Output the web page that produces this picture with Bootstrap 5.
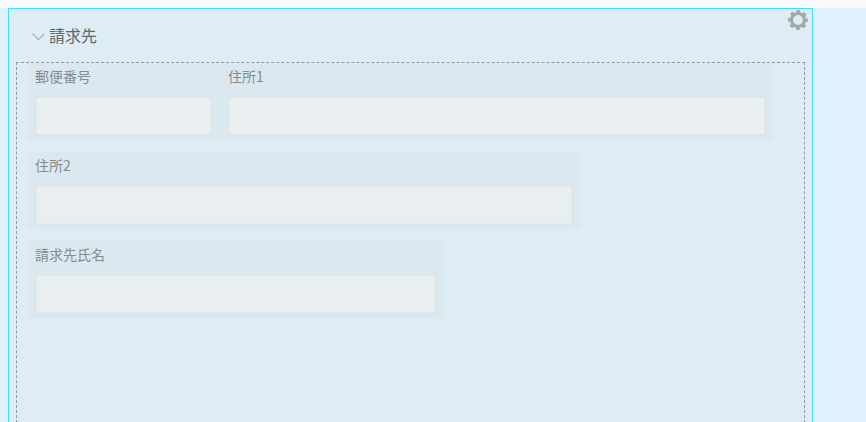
<!DOCTYPE html>
<html lang="ja">
<head>
<meta charset="utf-8">
<title>請求先</title>
<link href="https://cdn.jsdelivr.net/npm/bootstrap@5.3.0/dist/css/bootstrap.min.css" rel="stylesheet">
<style>
html,body{height:422px;overflow:hidden}
body{background:#e0f1ff;font-family:"Noto Sans CJK JP","Liberation Sans",sans-serif}
.topstrip{height:8px;background:#f8f9fb}
.panel{margin-left:8px;width:805px;height:414px;border:1px solid #3fe0ff;border-bottom:0;background:#deecf5;position:relative}
.gear{position:absolute;top:0;right:3px;width:22px;height:22px}
.head{height:53px;padding:16px 0 0 23px;color:#63676a;font-size:16px;line-height:20px}
.chev{width:13px;height:8px;margin-right:4px;margin-top:8px}
.zone{margin:0 7px;height:361px;border:1px dashed #969a9e;border-bottom:0;padding-left:10px}
.grp{background:#dbe8f0;padding:0 8px;height:77px}
.lbl{color:#888b8e;font-size:14px;line-height:20px;height:33px;padding-top:3px}
.box{height:40px;background:#e9eef0;border:1px solid #dce3e6;box-shadow:inset 0 0 0 1px #e5ebed}
.line1{width:746px;padding-right:7px}
.f1{width:177px}
.f2{width:538px}
.w2{width:554px}
.w3{width:417px}
.gapy{margin-top:12px}
</style>
</head>
<body>
<div class="topstrip"></div>
<div class="panel">
  <svg class="gear" viewBox="0 0 22 22" aria-hidden="true">
    <circle cx="11" cy="11" r="6.5" fill="none" stroke="#a4a6a8" stroke-width="3.2"/>
    <circle cx="11" cy="11" r="8.75" fill="none" stroke="#a4a6a8" stroke-width="2.5" stroke-dasharray="3.6 3.272" stroke-dashoffset="1.8"/>
  </svg>
  <div class="head d-flex align-items-start">
    <svg class="chev" viewBox="0 0 13 8" aria-hidden="true"><path d="M.5.7l6 6 6-6" fill="none" stroke="#a4abb0" stroke-width="1.1"/></svg>
    <span>請求先</span>
  </div>
  <div class="zone">
    <div class="d-flex grp line1">
      <div class="flex-shrink-0 f1">
        <div class="lbl">郵便番号</div>
        <div class="box"></div>
      </div>
      <div class="flex-shrink-0 ms-3 f2">
        <div class="lbl">住所1</div>
        <div class="box"></div>
      </div>
    </div>
    <div class="grp w2 gapy">
      <div class="lbl">住所2</div>
      <div class="box"></div>
    </div>
    <div class="grp w3 gapy">
      <div class="lbl">請求先氏名</div>
      <div class="box"></div>
    </div>
  </div>
</div>
</body>
</html>
